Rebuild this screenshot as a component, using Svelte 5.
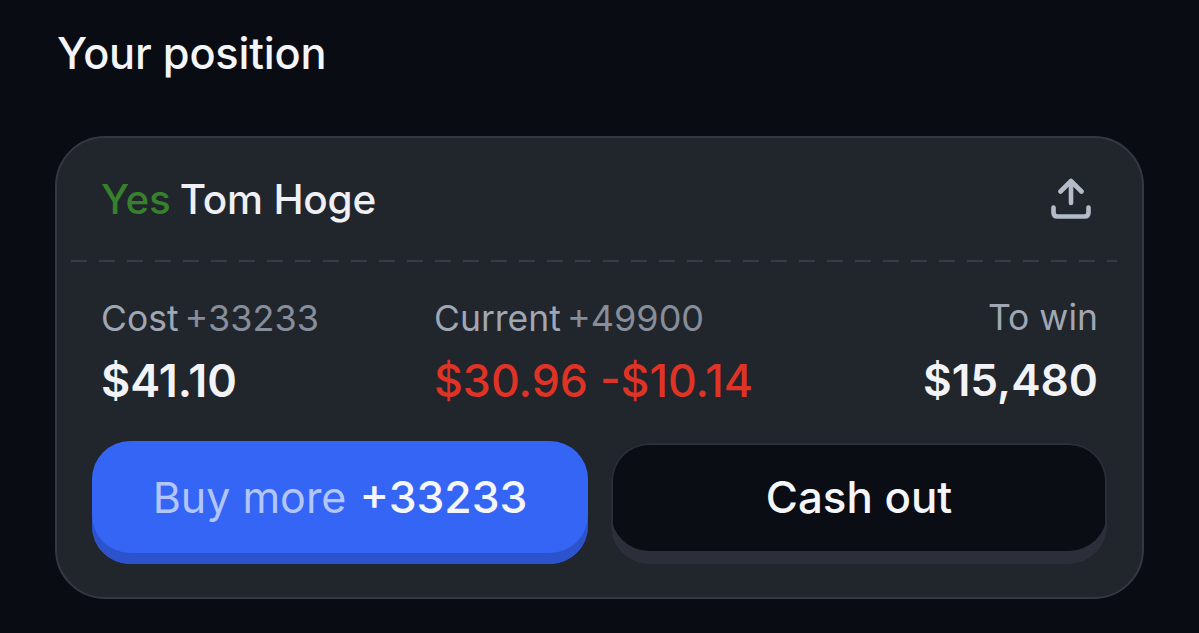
<script>
  const stats = [
    { label: 'Cost', odds: '+33233', value: '$41.10', cls: 'cost' },
    { label: 'Current', odds: '+49900', value: '$30.96 -$10.14', cls: 'current' },
    { label: 'To win', odds: '', value: '$15,480', cls: 'win' }
  ];
</script>

<main class="page">
  <h1>Your position</h1>
  <section class="card">
    <header class="head">
      <div class="name"><span class="yes">Yes</span><span class="who">Tom Hoge</span></div>
      <svg class="share" width="40" height="42" viewBox="0 0 40 42" fill="none" stroke="#b4bcc9" stroke-width="4.6" stroke-linecap="round" stroke-linejoin="round">
        <path d="M20 25V4M9.5 13.5L20 3L30.5 13.5" />
        <path d="M2.5 29.5V34.5Q2.5 38.5 6.5 38.5H33.5Q37.5 38.5 37.5 34.5V29.5" />
      </svg>
    </header>
    <div class="rule"></div>
    <div class="stats">
      {#each stats as s}
        <div class="stat {s.cls}">
          <div class="label">{s.label}{#if s.odds}<span class="odds">{s.odds}</span>{/if}</div>
          <div class="value">{s.value}</div>
        </div>
      {/each}
    </div>
    <div class="actions">
      <button class="btn buy"><span class="dim">Buy more</span><span class="plus">+33233</span></button>
      <button class="btn cash">Cash out</button>
    </div>
  </section>
</main>

<style>
  :global(body) {
    margin: 0;
    background: #0a0c14;
  }
  .page {
    box-sizing: border-box;
    height: 633px;
    padding: 28px 55px 0;
    font-family: Inter, "Liberation Sans", sans-serif;
    overflow: hidden;
  }
  h1 {
    margin: 0 0 58px 2px;
    font-size: 43.3px;
    line-height: 50px;
    font-weight: 500;
    color: #f4f5f8;
    letter-spacing: -0.2px;
  }
  .card {
    box-sizing: border-box;
    width: 1089px;
    height: 463px;
    padding: 0 35px;
    background: #21252c;
    border: 2px solid #343842;
    border-radius: 50px;
  }
  .head {
    display: flex;
    justify-content: space-between;
    align-items: center;
    height: 122px;
    padding: 0 16px 0 9px;
  }
  .name {
    display: flex;
    gap: 9px;
    font-size: 40.5px;
    font-weight: 500;
    color: #eef0f5;
    letter-spacing: -0.2px;
  }
  .yes {
    color: #37802c;
  }
  .rule {
    height: 2px;
    margin: 0 -10px 0 -21px;
    background: repeating-linear-gradient(90deg, #383c46 0 16px, transparent 16px 28px);
  }
  .stats {
    display: grid;
    grid-template-columns: 333px 1fr auto;
    padding: 36px 9px 0 9px;
  }
  .label {
    font-size: 35.5px;
    line-height: 40px;
    color: #a0a7b4;
    display: flex;
    align-items: baseline;
    gap: 6px;
  }
  .odds {
    color: #868d9b;
    font-size: 36px;
  }
  .value {
    margin-top: 16px;
    font-size: 45px;
    line-height: 52px;
    font-weight: 600;
    color: #f2f3f6;
  }
  .current .value {
    color: #df3325;
    font-weight: 500;
    font-size: 44.7px;
  }
  .win {
    text-align: right;
  }
  .win .value {
    font-size: 44.2px;
  }
  .win .label {
    justify-content: flex-end;
  }
  .actions {
    display: grid;
    grid-template-columns: 496px 496px;
    gap: 23px;
    margin: 34px 0 0;
  }
  .btn {
    box-sizing: border-box;
    height: 123px;
    border: 0;
    border-radius: 38px;
    font: 500 43.8px Inter, "Liberation Sans", sans-serif;
    color: #f5f6f9;
    padding: 0 0 12px;
  }
  .buy {
    display: flex;
    justify-content: center;
    align-items: center;
    gap: 13px;
    background: #3565f5;
    box-shadow: inset 0 -11px 0 #2c52cc;
  }
  .dim {
    color: #b2c6fb;
    font-weight: 400;
    font-size: 43px;
  }
  .plus {
    font-size: 44.4px;
  }
  .cash {
    margin-top: 2px;
    height: 121px;
    background: #0b0d14;
    box-shadow: inset 0 -13px 0 #2c2f39, inset 0 0 0 2px #2c2f39;
  }
</style>
